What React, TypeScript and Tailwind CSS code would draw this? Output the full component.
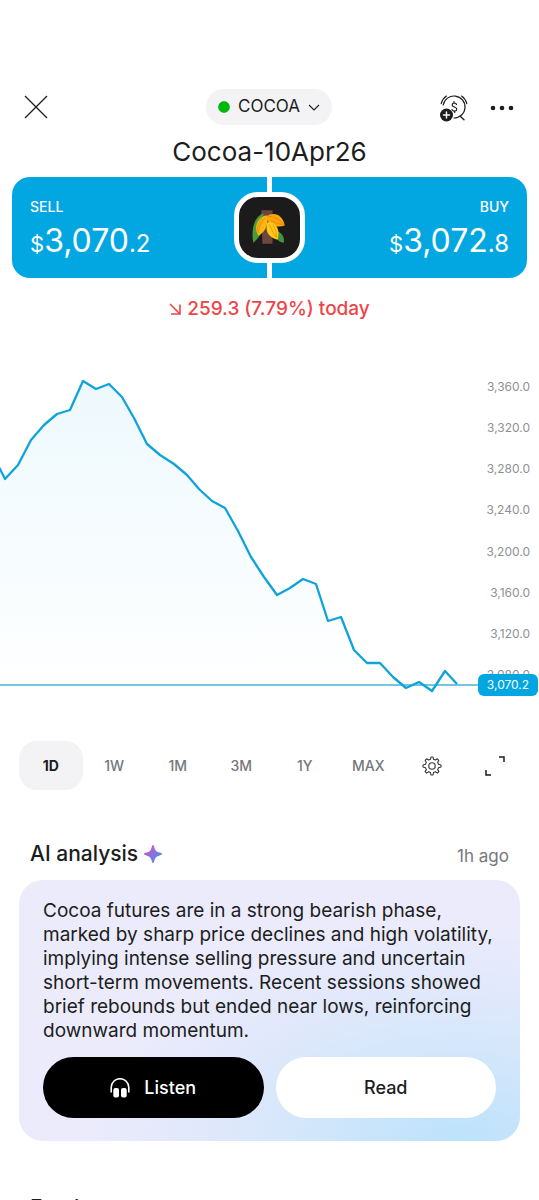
import { useState } from "react";
import { FaCircle } from "react-icons/fa"

const ranges = ["1D", "1W", "1M", "3M", "1Y", "MAX"]

const axisLabels = ["3,360.0", "3,320.0", "3,280.0", "3,240.0", "3,200.0", "3,160.0", "3,120.0", "3,080.0"]

// x, y pairs inside the 539 x 380 chart view box
const points = [
    [-8, 118], [0, 129], [5, 139], [18, 125], [31, 100], [44, 85], [57, 74], [70, 70], [83, 41], [96, 49], [109, 44],
    [122, 57], [134, 78], [147, 104], [160, 115], [174, 124], [187, 135], [199, 149], [212, 161], [225, 168],
    [238, 191], [251, 217], [264, 237], [277, 255], [290, 248], [303, 239], [316, 244], [328, 281], [341, 277],
    [354, 310], [367, 323], [380, 323], [393, 337], [406, 348], [419, 342], [432, 351], [445, 331], [457, 344],
]

const line = points.map(([x, y]) => `${x},${y}`).join(" ")

function CocoaIcon() {
    return (
        <svg viewBox="0 0 60 60" className="h-full w-full" aria-hidden="true">
            <path d="M22 13h11v33H23z" fill="#6b4740" />
            <path d="M24 16C14 20 12 33 14 45c5-4 8-9 10-15z" fill="#4b9a3c" />
            <path d="M37 33c6 3 8 7 7 12-4 0-7-3-9-8z" fill="#43943c" />
            <path d="M27 18c3 7-1 17-8 20-5-8-1-18 8-20z" fill="#fbb811" />
            <path d="M26 20c-5 5-7 10-7 16M23 20c-4 5-5 9-5 14" fill="none" stroke="#ef9209" />
            <path d="M27 19c7-5 16-2 18 9-8 3-17 0-18-9z" fill="#fca70c" />
            <path d="M29 19c6 0 12 4 15 8M31 23c4 2 8 4 12 4" fill="none" stroke="#ee8505" />
            <path d="M28 25c8-1 13 7 10 17-9-2-13-9-10-17z" fill="#fdc91c" />
            <path d="M30 27c2 5 4 10 7 13M33 27c3 4 4 8 4 12" fill="none" stroke="#efa00d" />
        </svg>
    )
}

function AlarmIcon() {
    return (
        <svg width="30" height="30" viewBox="1 0 30 30" fill="none" stroke="#1c1d21" strokeLinecap="round" aria-hidden="true">
            <path d="M4.200 13A11 11 0 1 1 15 26" strokeWidth="1.200" />
            <path d="M2.200 11.600A13.300 13.300 0 0 1 7.400 4.100M22.600 4.100A13.300 13.300 0 0 1 27.800 11.600" strokeWidth="1.200" />
            <path d="M21.500 24.500l3.500 3.300" strokeWidth="1.300" />
            <path d="M17.500 12.500c-.7-2.200-4.400-1.900-4.400.4 0 2.400 4.700 1.800 4.700 4.300 0 2.300-3.900 2.700-4.800.4M15 9.500v1.700M15.700 19v1.500" strokeWidth="1.200" />
            <circle cx="7.500" cy="23" r="6.500" fill="#1c1d21" stroke="none" />
            <path d="M7.500 20v6M4.500 23h6" stroke="#fff" strokeWidth="1.400" />
        </svg>
    )
}

function GearIcon() {
    return (
        <svg width="20" height="20" viewBox="0 0 20 20" fill="none" stroke="#333438" strokeWidth="1.100" strokeLinejoin="round" aria-hidden="true">
            <path d="M8.500 3.200 9 1h2l.5 2.200 1.900.8 1.900-1.200 1.500 1.500L15.700 6.200l.8 2L19 9v2l-2.500.7-.8 1.900 1.200 2-1.500 1.500-2-1.300-1.900.8L11 19H9l-.5-2.400-1.900-.8-2 1.300-1.500-1.500 1.200-2-.8-1.900L1 11V9l2.500-.8.8-2-1.200-1.900 1.500-1.500L6.600 4z" />
            <circle cx="10" cy="10" r="3.200" />
        </svg>
    )
}

function HeadphonesIcon() {
    return (
        <svg width="20" height="20" viewBox="0 0 20 20" aria-hidden="true">
            <path d="M1.200 14.500V9.500a8.800 8.800 0 0 1 17.600 0v5" fill="none" stroke="#fff" strokeWidth="1.600" />
            <rect x="3.300" y="10" width="5.700" height="9.500" rx="2" fill="#fff" />
            <rect x="11" y="10" width="5.700" height="9.500" rx="2" fill="#fff" />
        </svg>
    )
}

export default function App() {

    const [range, setRange] = useState<string>("1D")

    return (
        <div className="w-full h-screen overflow-hidden bg-white text-[#1c1d21] font-['Inter',sans-serif]">

            <header className="grid grid-cols-[1fr_auto_1fr] items-center pt-[89px] pl-6 pr-[25px]">
                <button type="button" aria-label="Close" className="w-6 h-9 flex items-center justify-center">
                    <svg width="24" height="24" viewBox="0 0 24 24" stroke="#1c1d21" strokeWidth="1.3" aria-hidden="true">
                        <path d="M1 1l22 22M23 1 1 23" />
                    </svg>
                </button>
                <button type="button" className="h-9 px-3 rounded-full bg-[#f3f3f5] flex items-center gap-2 text-[17px]">
                    <FaCircle size={12} color="#00b80c"/>
                    COCOA
                    <svg width="12" height="7" viewBox="0 0 12 7" fill="none" stroke="#1c1d21" strokeWidth="1.1" aria-hidden="true">
                        <path d="M1 1l5 5 5-5" />
                    </svg>
                </button>
                <div className="flex items-center justify-end gap-5">
                    <button type="button" aria-label="Add price alert"><AlarmIcon/></button>
                    <button type="button" aria-label="More options">
                        <svg width="24" height="24" viewBox="0 0 24 24" fill="#1c1d21" aria-hidden="true">
                            <circle cx="3" cy="13" r="2.300" />
                            <circle cx="12" cy="13" r="2.300" />
                            <circle cx="21" cy="13" r="2.300" />
                        </svg>
                    </button>
                </div>
            </header>

            <h1 className="mt-2 text-center text-[26px] leading-[38px]">Cocoa-10Apr26</h1>

            <div className="relative mt-1.5 mx-3 grid grid-cols-2 gap-[5px] text-white">
                <button type="button" className="h-[101px] px-[18px] pt-1.5 rounded-l-[18px] bg-[#02a7e2] flex flex-col items-start justify-center">
                    <span className="text-sm leading-6 font-medium">SELL</span>
                    <span className="text-[32px] leading-11"><span className="text-[22px]">$</span>3,070<span className="text-2xl">.2</span></span>
                </button>
                <button type="button" className="h-[101px] px-[18px] pt-1.5 rounded-r-[18px] bg-[#02a7e2] flex flex-col items-end justify-center">
                    <span className="text-sm leading-6 font-medium">BUY</span>
                    <span className="text-[32px] leading-11"><span className="text-[22px]">$</span>3,072<span className="text-2xl">.8</span></span>
                </button>
                <div className="absolute inset-0 m-auto size-[71px] rounded-3xl border-5 border-white bg-[#1b1b1b]">
                    <CocoaIcon/>
                </div>
            </div>

            <p className="mt-[18px] flex items-center justify-center gap-1.5 text-[19px] leading-[26px] font-medium text-[#ee4549]">
                <svg width="12" height="12" viewBox="0 0 12 12" fill="none" stroke="#ee4549" strokeWidth="1.600" aria-hidden="true">
                    <path d="M1 1l10 10M11 1.500V11H2" />
                </svg>
                259.3 (7.79%) today
            </p>

            <section aria-label="Price chart" className="relative mt-[18px] h-[380px]">
                <svg viewBox="0 0 539 380" preserveAspectRatio="none" className="block w-full h-full" aria-hidden="true">
                    <defs>
                        <linearGradient id="area" x1="0" y1="0" x2="0" y2="1">
                            <stop offset="0" stopColor="#02a7e2" stopOpacity=".07" />
                            <stop offset="1" stopColor="#02a7e2" stopOpacity="0" />
                        </linearGradient>
                    </defs>
                    <polygon points={`${line} 457,345 -8,345`} fill="url(#area)" />
                    <path d="M0 345h480" stroke="#45b3d8" strokeWidth="1.300" />
                    <polyline points={line} fill="none" stroke="#0fa3da" strokeWidth="2.300" strokeLinejoin="round" />
                </svg>
                <div className="absolute top-[39px] right-[9px] h-[304px] flex flex-col justify-between text-right text-xs leading-4 text-[#8e9095]">
                    {axisLabels.map((label) => <span key={label}>{label}</span>)}
                </div>
                <div className="absolute top-[334px] right-px w-[60px] h-[22px] rounded-md bg-[#02a7e2] text-center text-xs leading-[22px] text-white">3,070.2</div>
            </section>

            <div className="mt-[21px] pl-[19px] pr-3 grid grid-cols-8">
                {ranges.map((item) => (
                    <button key={item} type="button" onClick={() => setRange(item)} className={item === range ? "h-[49px] rounded-[18px] bg-[#f3f3f5] text-sm font-bold" : "h-[49px] text-sm font-medium text-[#76777b]"}>{item}</button>
                ))}
                <button type="button" aria-label="Chart settings" className="h-[49px] flex items-center justify-center"><GearIcon/></button>
                <button type="button" aria-label="Full screen" className="h-[49px] flex items-center justify-center">
                    <svg width="20" height="20" viewBox="0 0 20 20" fill="none" stroke="#1c1d21" strokeWidth="1.500" aria-hidden="true">
                        <path d="M14 1h5v5M1 14v5h5" />
                    </svg>
                </button>
            </div>

            <div className="mt-[50px] px-[30px] flex items-center justify-between">
                <h2 className="flex items-center gap-1.5 text-[21px] leading-7 font-medium">
                    AI analysis
                    <svg width="18" height="18" viewBox="0 0 18 18" aria-hidden="true">
                        <defs>
                            <linearGradient id="spark" x1="0.2" y1="0.2" x2="0.8" y2="0.8">
                                <stop offset="0" stopColor="#c956d4" />
                                <stop offset="1" stopColor="#4a8ee8" />
                            </linearGradient>
                        </defs>
                        <path d="M9 0c.8 0 1 1 1.400 2.400.7 3.200 2 4.500 5.200 5.200C17 8 18 8.200 18 9s-1 1-2.400 1.400c-3.200.7-4.500 2-5.200 5.200C10 17 9.800 18 9 18s-1-1-1.400-2.400c-.7-3.200-2-4.500-5.200-5.200C1 10 0 9.800 0 9s1-1 2.400-1.400c3.200-.7 4.500-2 5.200-5.200C8 1 8.200 0 9 0z" fill="url(#spark)" />
                    </svg>
                </h2>
                <span className="mt-1 text-[17px] leading-6 text-[#76777b]">1h ago</span>
            </div>

            <section className="mt-3 mx-[19px] px-6 pt-[19px] pb-[23px] rounded-3xl bg-[radial-gradient(ellipse_75%_85%_at_88%_102%,#bbe2fb_0%,#cfe6fb_35%,#dfe8fb_65%,#ebebfb_100%)]">
                <p className="text-[19px] leading-6">
                    Cocoa futures are in a strong bearish phase,<br/>
                    marked by sharp price declines and high volatility,<br/>
                    implying intense selling pressure and uncertain<br/>
                    short-term movements. Recent sessions showed<br/>
                    brief rebounds but ended near lows, reinforcing<br/>
                    downward momentum.
                </p>
                <div className="mt-3.5 grid grid-cols-2 gap-3 text-lg font-medium">
                    <button type="button" className="h-[61px] rounded-full bg-black text-white flex items-center justify-center gap-3.5">
                        <HeadphonesIcon/>
                        Listen
                    </button>
                    <button type="button" className="h-[61px] rounded-full bg-white">Read</button>
                </div>
            </section>

            <div className="mt-[53px] px-[30px] flex items-center justify-between">
                <h2 className="text-[21px] leading-7 font-medium">Feed</h2>
                <a href="#feed" className="text-[17px] leading-6 text-[#76777b]">See all</a>
            </div>

        </div>
    )
}
